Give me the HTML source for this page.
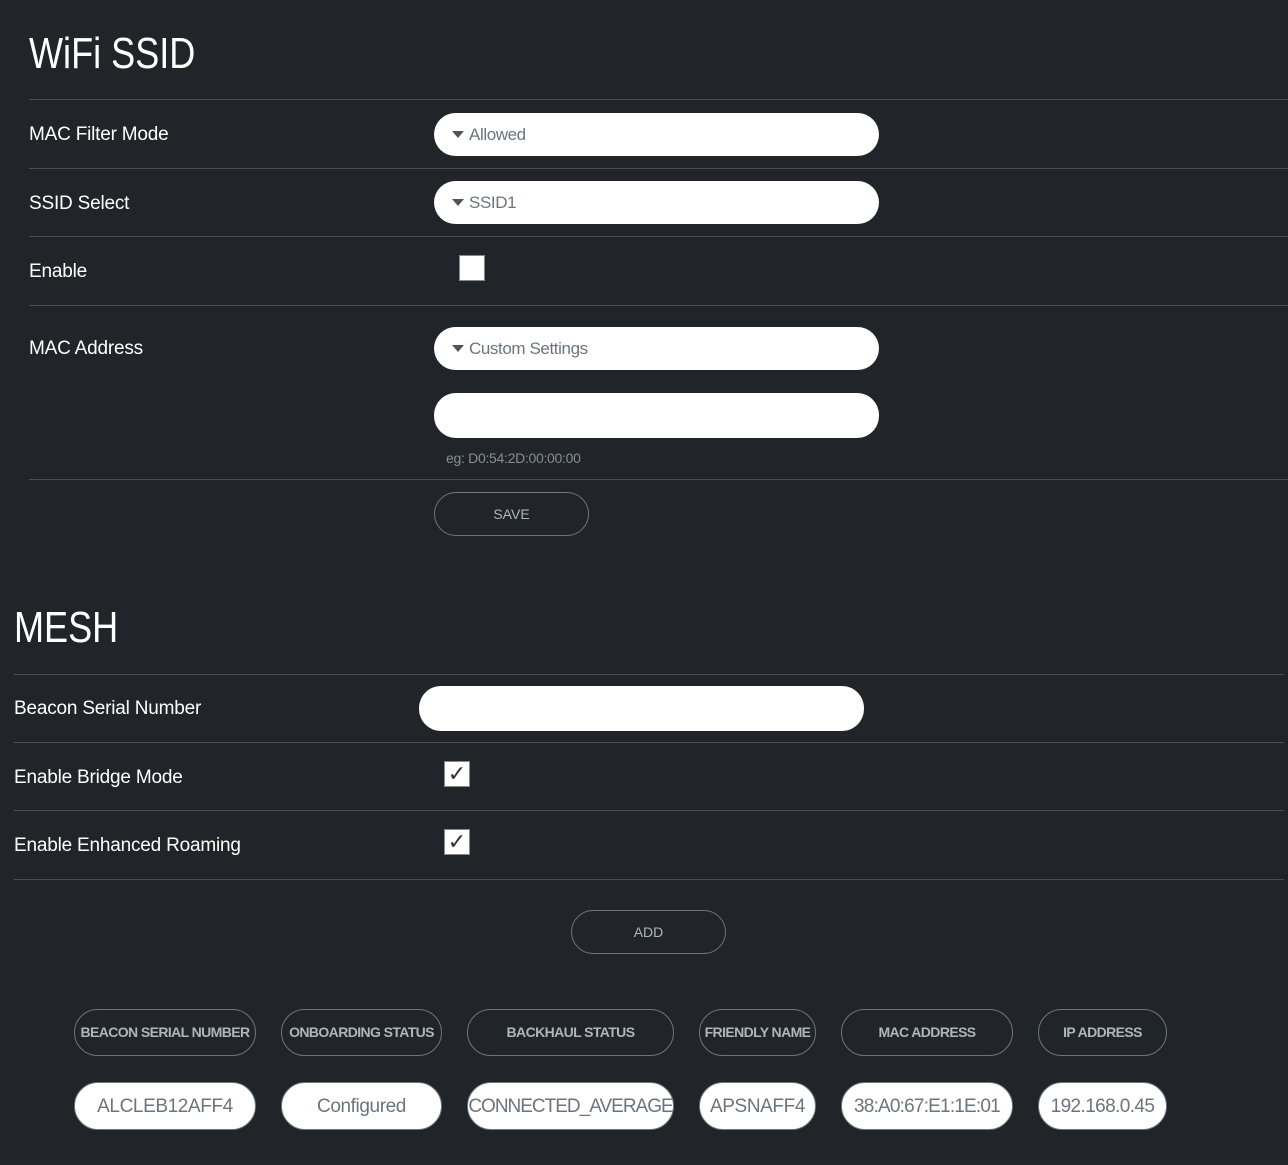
<!DOCTYPE html>
<html><head><meta charset="utf-8"><style>
*{box-sizing:border-box;margin:0;padding:0}
body{width:1288px;height:1165px;background:#212529;font-family:"Liberation Sans",sans-serif;color:#fff;position:relative;overflow:hidden}
.a{position:absolute}
.t{font-size:19px;letter-spacing:-0.2px;color:#fff}
.h{font-size:44px;letter-spacing:0;font-weight:400;transform:scaleX(0.82);transform-origin:left;white-space:nowrap}
.ln{height:1px;background:#4a4f55}
.inp{background:#fff;border-radius:22px;height:43px;width:445px;color:#6c757d;font-size:17px;letter-spacing:-0.4px;padding-left:18px;line-height:43px}
.inp .c{display:inline-block;width:0;height:0;border-left:6px solid transparent;border-right:6px solid transparent;border-top:7px solid #555;margin-right:5px;vertical-align:2px}
.cb{width:26px;height:26px;background:#fff;border:1px solid #888}
.btn{border:1px solid #6c757d;border-radius:22px;color:#adb5bd;font-size:14px;text-align:center;width:155px;height:44px;line-height:42px}
.ph{border:1px solid #6c757d;border-radius:24px;height:47px;line-height:45px;color:#adb5bd;font-size:14px;font-weight:bold;text-align:center;letter-spacing:-0.6px;white-space:nowrap;overflow:hidden}
.pv{background:#fff;border:1px solid #6c757d;border-radius:24px;height:48px;line-height:48px;color:#6c757d;font-size:19px;text-align:center;letter-spacing:-0.4px;white-space:nowrap;overflow:hidden}
</style></head><body>
<div class="a h" style="left:29px;top:29px">WiFi SSID</div>
<div class="a ln" style="left:29px;top:99px;width:1259px"></div>
<div class="a t" style="left:29px;top:124px">MAC Filter Mode</div>
<div class="a inp" style="left:434px;top:113px"><span class="c"></span>Allowed</div>
<div class="a ln" style="left:29px;top:168px;width:1259px"></div>
<div class="a t" style="left:29px;top:193px">SSID Select</div>
<div class="a inp" style="left:434px;top:181px"><span class="c"></span>SSID1</div>
<div class="a ln" style="left:29px;top:236px;width:1259px"></div>
<div class="a t" style="left:29px;top:261px">Enable</div>
<div class="a cb" style="left:459px;top:255px"></div>
<div class="a ln" style="left:29px;top:305px;width:1259px"></div>
<div class="a t" style="left:29px;top:338px">MAC Address</div>
<div class="a inp" style="left:434px;top:327px"><span class="c"></span>Custom Settings</div>
<div class="a inp" style="left:434px;top:393px;height:45px"></div>
<div class="a" style="left:446px;top:450px;font-size:14px;color:#868e96;letter-spacing:-0.3px">eg: D0:54:2D:00:00:00</div>
<div class="a ln" style="left:29px;top:479px;width:1259px"></div>
<div class="a btn" style="left:434px;top:492px">SAVE</div>

<div class="a h" style="left:14px;top:603px">MESH</div>
<div class="a ln" style="left:14px;top:674px;width:1270px"></div>
<div class="a t" style="left:14px;top:698px">Beacon Serial Number</div>
<div class="a inp" style="left:419px;top:686px;height:45px"></div>
<div class="a ln" style="left:14px;top:742px;width:1270px"></div>
<div class="a t" style="left:14px;top:767px">Enable Bridge Mode</div>
<div class="a cb" style="left:444px;top:761px;color:#333;font-size:22px;line-height:24px;text-align:center">✓</div>
<div class="a ln" style="left:14px;top:810px;width:1270px"></div>
<div class="a t" style="left:14px;top:835px">Enable Enhanced Roaming</div>
<div class="a cb" style="left:444px;top:829px;color:#333;font-size:22px;line-height:24px;text-align:center">✓</div>
<div class="a ln" style="left:14px;top:879px;width:1270px"></div>
<div class="a btn" style="left:571px;top:910px">ADD</div>

<div class="a ph" style="left:74px;top:1009px;width:182px">BEACON SERIAL NUMBER</div>
<div class="a ph" style="left:281px;top:1009px;width:161px">ONBOARDING STATUS</div>
<div class="a ph" style="left:467px;top:1009px;width:207px">BACKHAUL STATUS</div>
<div class="a ph" style="left:699px;top:1009px;width:117px">FRIENDLY NAME</div>
<div class="a ph" style="left:841px;top:1009px;width:172px">MAC ADDRESS</div>
<div class="a ph" style="left:1038px;top:1009px;width:129px">IP ADDRESS</div>
<div class="a pv" style="left:74px;top:1082px;width:182px">ALCLEB12AFF4</div>
<div class="a pv" style="left:281px;top:1082px;width:161px">Configured</div>
<div class="a pv" style="left:467px;top:1082px;width:207px;letter-spacing:-1px">CONNECTED_AVERAGE</div>
<div class="a pv" style="left:699px;top:1082px;width:117px">APSNAFF4</div>
<div class="a pv" style="left:841px;top:1082px;width:172px;letter-spacing:-0.8px">38:A0:67:E1:1E:01</div>
<div class="a pv" style="left:1038px;top:1082px;width:129px;letter-spacing:-0.6px">192.168.0.45</div>
</body></html>
